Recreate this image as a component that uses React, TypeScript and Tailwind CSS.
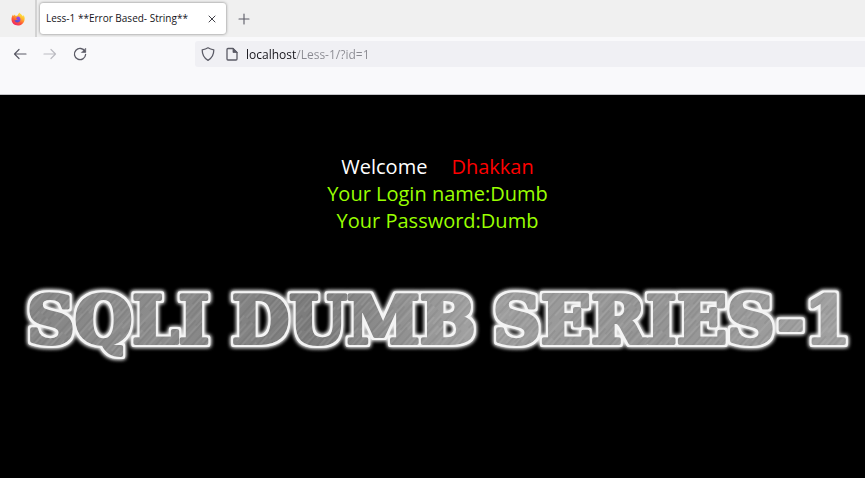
import React from 'react';

const FirefoxLogo: React.FC = () => (
  <svg className="h-[14px] w-[14px]" viewBox="0 0 28 28" aria-hidden="true">
    <defs>
      <linearGradient id="fox" x1="0.8" y1="0.05" x2="0.25" y2="1">
        <stop offset="0" stopColor="#fff04a" />
        <stop offset="0.35" stopColor="#ffb52b" />
        <stop offset="0.65" stopColor="#ff5a36" />
        <stop offset="1" stopColor="#ee1f6c" />
      </linearGradient>
      <linearGradient id="globe" x1="0.7" y1="0" x2="0.3" y2="1">
        <stop offset="0" stopColor="#a347f0" />
        <stop offset="1" stopColor="#4b50c8" />
      </linearGradient>
    </defs>
    <path
      fill="url(#fox)"
      d="M17 1c1 3 5 4 7 8l1-3c2 3 3 6 2 10-1 7-7 11-13 11C6 27 1 21 1 15c0-4 1-7 3-10l1 3 3-3 1 3 4-1c1-2 2-4 4-6z"
    />
    <path fill="url(#globe)" d="M12 10c3-2 7 0 7 5 0 4-3 6-6 6s-6-2-6-5c3 1 5 0 7-2-3 0-4-1-4-2 1 0 1-1 2-2z" />
  </svg>
);

const iconProps = {
  viewBox: '0 0 16 16',
  fill: 'none',
  stroke: 'currentColor',
  strokeLinecap: 'round',
  strokeLinejoin: 'round',
  'aria-hidden': true,
} as const;

const TabBar: React.FC = () => (
  <div className="flex h-[37px] items-stretch bg-[#f0f0f0]">
    <button type="button" aria-label="Firefox" className="flex w-[35px] items-center justify-center">
      <FirefoxLogo />
    </button>
    <div className="w-0.5 bg-[#d3d3d3]" />
    <div className="my-[3px] ml-[3px] flex w-[186px] items-center justify-between rounded-[3px] bg-white pr-2 pl-1.5 shadow-[0_0_3px_rgba(0,0,0,0.5)]">
      <span className="text-[10px] font-medium whitespace-nowrap text-[#15141a]">Less-1 **Error Based- String**</span>
      <button type="button" aria-label="Close tab" className="text-[#3c3c43]">
        <svg {...iconProps} className="h-3 w-3">
          <path d="M4 4l8 8M12 4l-8 8" strokeWidth="1.3" />
        </svg>
      </button>
    </div>
    <button type="button" aria-label="New tab" className="ml-2.5 text-[#5b5b66]">
      <svg {...iconProps} className="h-4 w-4">
        <path d="M8 3v10M3 8h10" strokeWidth="1.1" />
      </svg>
    </button>
  </div>
);

const NavBar: React.FC = () => (
  <div className="flex h-[58px] items-start border-b border-[#c4c4c8] bg-[#f9f9fb] pt-1">
    <div className="flex h-[26px] w-[195px] items-center gap-[14px] pl-3 text-[#5b5b66]">
      <button type="button" aria-label="Back">
        <svg {...iconProps} className="h-4 w-4">
          <path d="M14 8H2.500M7 3.500L2.500 8 7 12.500" strokeWidth="1.2" />
        </svg>
      </button>
      <button type="button" aria-label="Forward" disabled className="text-[#bcbcc2]">
        <svg {...iconProps} className="h-4 w-4">
          <path d="M2 8h11.500M9 3.500L13.500 8 9 12.500" strokeWidth="1.2" />
        </svg>
      </button>
      <button type="button" aria-label="Reload">
        <svg {...iconProps} className="h-4 w-4">
          <path d="M13 5.500A5.600 5.600 0 1 0 13.600 8.500" strokeWidth="1.3" />
          <path d="M13.700 2.500v4h-4z" fill="currentColor" strokeWidth="0.6" />
        </svg>
      </button>
    </div>
    <div className="flex h-[26px] flex-1 items-center rounded-l-[3px] bg-[#f0f0f4] pl-[5px] text-[#5b5b66]">
      <svg {...iconProps} className="h-4 w-4 shrink-0">
        <path d="M8 1.800c1.800 1.200 3.600 1.700 5.800 2 0 4.700-1.800 8.400-5.800 10.500C4 12.200 2.200 8.500 2.200 3.800 4.400 3.500 6.200 3 8 1.800z" strokeWidth="1.3" />
      </svg>
      <svg {...iconProps} className="ml-2 h-4 w-4 shrink-0">
        <path d="M4 2.500h5l4 4v6.500a1 1 0 0 1-1 1H4a1 1 0 0 1-1-1v-9.500a1 1 0 0 1 1-1z" strokeWidth="1.3" />
        <path d="M9 2.500v4h4z" fill="currentColor" strokeWidth="0.8" />
      </svg>
      {/* the domain is dark, the rest of the address is dimmed */}
      <input
        type="text"
        aria-label="Address"
        className="ml-[6px] h-5 min-w-0 flex-1 bg-[linear-gradient(90deg,#15141a_50px,#8a8a91_50px)] bg-clip-text text-[12px] text-transparent caret-[#15141a] outline-none"
        defaultValue="localhost/Less-1/?id=1"
      />
    </div>
  </div>
);

const Banner: React.FC = () => (
  <svg className="mt-[42px] w-full" viewBox="0 0 865 100" role="img" aria-label="SQLI DUMB SERIES-1">
    <defs>
      <linearGradient id="metal" x1="0" y1="0" x2="865" y2="0" gradientUnits="userSpaceOnUse">
        <stop offset="0" stopColor="#858585" />
        <stop offset="0.18" stopColor="#8c8c8c" />
        <stop offset="0.36" stopColor="#7c7c7c" />
        <stop offset="0.54" stopColor="#a0a0a0" />
        <stop offset="0.75" stopColor="#949494" />
        <stop offset="1" stopColor="#a2a2a2" />
      </linearGradient>
      <pattern id="scratches" width="31" height="67" patternUnits="userSpaceOnUse" patternTransform="rotate(42)">
        <path
          d="M2 0v24M5 30v30M9 8v40M13 0v14M13 40v27M18 12v34M22 0v20M25 28v39M29 5v30"
          stroke="#fff"
          strokeWidth="0.8"
          opacity="0.18"
        />
        <path
          d="M3 28v39M7 0v26M11 20v40M15 4v34M20 36v31M20 0v12M24 6v34M27 34v33M30 0v20"
          stroke="#000"
          strokeWidth="0.8"
          opacity="0.12"
        />
      </pattern>
      <pattern id="brushed" width="865" height="100" patternUnits="userSpaceOnUse">
        <rect width="865" height="100" fill="url(#metal)" />
        <rect width="865" height="100" fill="url(#scratches)" />
      </pattern>
      <filter id="glow" x="0" y="0" width="865" height="100" filterUnits="userSpaceOnUse">
        <feMorphology in="SourceAlpha" operator="dilate" radius="2" result="edge" />
        <feGaussianBlur in="edge" stdDeviation="2" result="soft" />
        <feGaussianBlur in="edge" stdDeviation="0.7" result="crisp" />
        <feFlood floodColor="#f4f4f4" result="white" />
        <feComposite in="white" in2="crisp" operator="in" result="rim" />
        <feComposite in="white" in2="soft" operator="in" result="halo" />
        <feMerge>
          <feMergeNode in="halo" />
          <feMergeNode in="halo" />
          <feMergeNode in="rim" />
          <feMergeNode in="SourceGraphic" />
        </feMerge>
      </filter>
    </defs>
    <g
      filter="url(#glow)"
      fill="url(#brushed)"
      stroke="url(#brushed)"
      strokeWidth="4"
      strokeLinejoin="round"
      className="font-['DejaVu_Serif',serif] text-[66px] font-bold"
    >
      <text x="27" y="67">SQLI</text>
      <text x="232" y="67">DUMB</text>
      <text x="493" y="67">SERIES-1</text>
    </g>
  </svg>
);

const App: React.FC = () => (
  <div className="min-h-screen bg-black font-['Open_Sans','Noto_Sans',sans-serif]">
    <header>
      <TabBar />
      <NavBar />
    </header>
    <main className="pt-[58px]">
      <div className="pl-[10px] text-center text-[20px] leading-[27px] text-[#99ff00]">
        <p className="flex justify-center gap-6">
          <span className="text-white">Welcome</span>
          <span className="text-[#ff0000]">Dhakkan</span>
        </p>
        <p>Your Login name:Dumb</p>
        <p>Your Password:Dumb</p>
      </div>
      <Banner />
    </main>
  </div>
);

export default App;
